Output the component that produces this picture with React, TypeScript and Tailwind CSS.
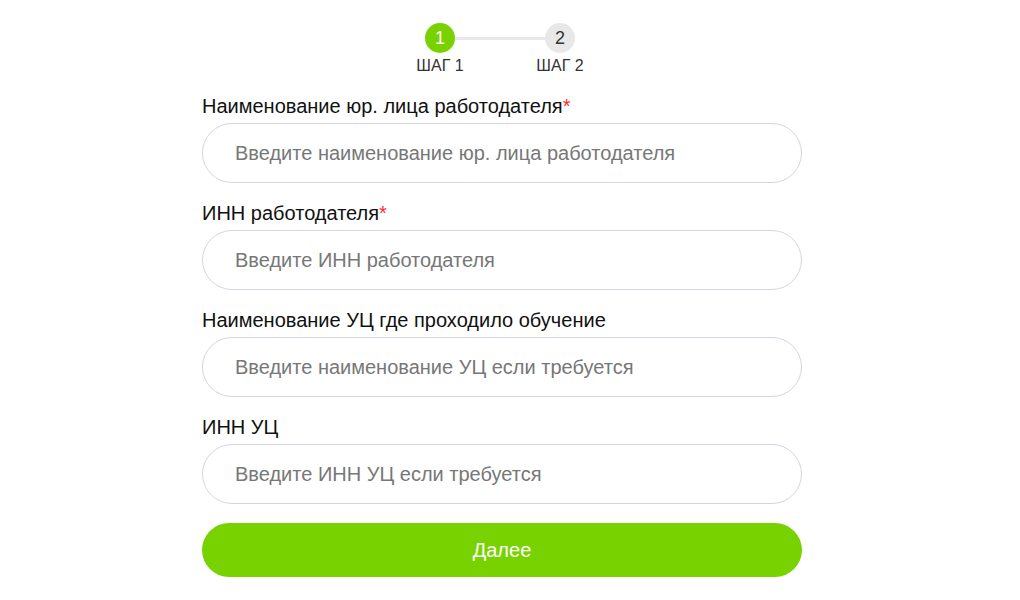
import React, { useState } from "react";

const fields = [
  {
    name: "employer_name",
    label: "Наименование юр. лица работодателя",
    placeholder: "Введите наименование юр. лица работодателя",
    required: true,
  },
  {
    name: "employer_inn",
    label: "ИНН работодателя",
    placeholder: "Введите ИНН работодателя",
    required: true,
  },
  {
    name: "center_name",
    label: "Наименование УЦ где проходило обучение",
    placeholder: "Введите наименование УЦ если требуется",
    required: false,
  },
  {
    name: "center_inn",
    label: "ИНН УЦ",
    placeholder: "Введите ИНН УЦ если требуется",
    required: false,
  },
];

function Steps() {
  return (
    <div className="flex justify-center pt-[23px] pr-[4px]">
      <div className="flex flex-col items-center w-[60px]">
        <div className="w-[30px] h-[30px] rounded-full bg-[#7ad100] text-white text-[18px] flex items-center justify-center">
          1
        </div>
        <span className="mt-[4px] text-[16px] leading-[18px] text-[#333]">ШАГ 1</span>
      </div>
      <div className="w-[90px] h-[3px] bg-[#e8e8e8] mt-[14px] -mx-[15px]" />
      <div className="flex flex-col items-center w-[60px]">
        <div className="w-[30px] h-[30px] rounded-full bg-[#e8e8e8] text-[#333] text-[18px] flex items-center justify-center">
          2
        </div>
        <span className="mt-[4px] text-[16px] leading-[18px] text-[#333]">ШАГ 2</span>
      </div>
    </div>
  );
}

export default function App() {
  const [values, setValues] = useState<Record<string, string>>({});

  return (
    <div
      className="min-h-[600px] w-[1004px] bg-white"
      style={{ fontFamily: '"Liberation Sans", Arial, sans-serif' }}
    >
      <Steps />
      <form
        className="w-[600px] mx-auto mt-[19px] flex flex-col"
        onSubmit={(e) => e.preventDefault()}
      >
        {fields.map((f) => (
          <div key={f.name} className="flex flex-col mb-[18px]">
            <label htmlFor={f.name} className="text-[20px] leading-[24px] text-[#111]">
              {f.label}
              {f.required && <span className="text-[#ff2a2a]">*</span>}
            </label>
            <input
              id={f.name}
              type="text"
              placeholder={f.placeholder}
              value={values[f.name] ?? ""}
              onChange={(e) => setValues({ ...values, [f.name]: e.target.value })}
              className="mt-[5px] h-[60px] w-full rounded-full border border-[#d5d5e0] px-[32px] text-[20px] text-[#333] placeholder:text-[#777] outline-none bg-white"
            />
          </div>
        ))}
        <button
          type="submit"
          className="mt-[1px] h-[54px] w-full rounded-full bg-[#78d200] text-white text-[20px]"
        >
          Далее
        </button>
      </form>
    </div>
  );
}
